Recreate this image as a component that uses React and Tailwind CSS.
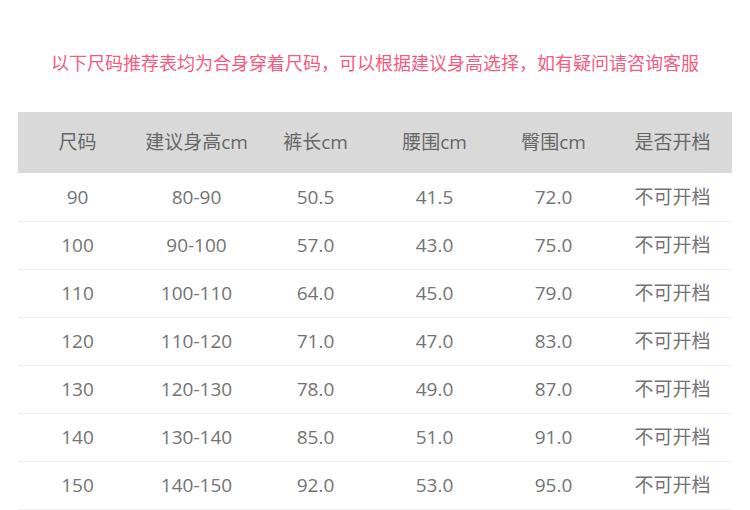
import React from "react";

const heads = ["尺码", "建议身高cm", "裤长cm", "腰围cm", "臀围cm", "是否开档"];

const rows = [
  ["90", "80-90", "50.5", "41.5", "72.0"],
  ["100", "90-100", "57.0", "43.0", "75.0"],
  ["110", "100-110", "64.0", "45.0", "79.0"],
  ["120", "110-120", "71.0", "47.0", "83.0"],
  ["130", "120-130", "78.0", "49.0", "87.0"],
  ["140", "130-140", "85.0", "51.0", "91.0"],
  ["150", "140-150", "92.0", "53.0", "95.0"],
];

const App = () => {
  return (
    <div
      className="w-[750px] h-[510px] overflow-hidden bg-white"
      style={{ fontFamily: '"Open Sans", "Noto Sans CJK SC", sans-serif' }}
    >
      <p className="pt-[50px] h-[112px] text-center text-[18px] leading-[26px] text-[#f55a80]">
        以下尺码推荐表均为合身穿着尺码，可以根据建议身高选择，如有疑问请咨询客服
      </p>

      <div className="mx-[18px] w-[714px]">
        <div className="grid grid-cols-6 h-[61px] items-center bg-[#d9d9d9] text-[19px] text-[#666]">
          {heads.map((h) => (
            <div key={h} className="text-center">
              {h}
            </div>
          ))}
        </div>

        {rows.map((r, idx) => (
          <div
            key={r[0]}
            className={`grid grid-cols-6 items-center border-b border-[#ececec] text-[19px] text-[#737373] ${
              idx === 0 ? "h-[49px] pt-px" : "h-[48px]"
            }`}
          >
            {r.map((c, i) => (
              <div key={i} className="text-center">
                {c}
              </div>
            ))}
            <div className="text-center">不可开档</div>
          </div>
        ))}
      </div>
    </div>
  );
};

export default App;
